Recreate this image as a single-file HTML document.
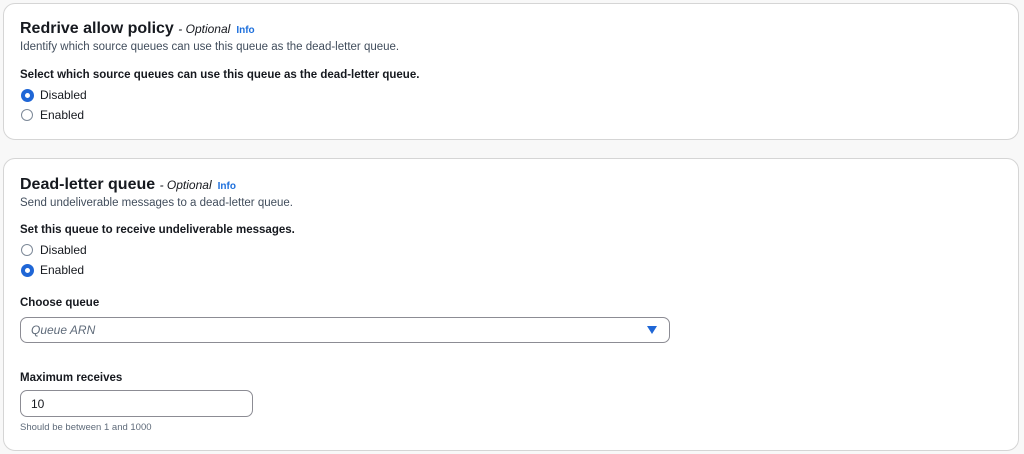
<!DOCTYPE html>
<html><head><style>
body{margin:0;width:1024px;height:454px;background:#f8f8f8;font-family:"Liberation Sans",sans-serif;color:#16191f;position:relative;overflow:hidden}
.card{position:absolute;left:3px;width:1016px;background:#fff;border:1px solid #d5d5d5;border-radius:12px;box-sizing:border-box}
.a{position:absolute;white-space:nowrap}
.t{font-size:16px;font-weight:bold}
.t i{font-weight:normal;font-size:12px}
.t b{color:#1d6fdc;font-size:10px;margin-left:6px}
.d{font-size:11.5px;color:#414d5c}
.l{font-size:11.5px;font-weight:bold}
.r{font-size:12px}
.rad{position:absolute;width:10px;height:10px;border:1px solid #7d8998;border-radius:50%;background:#fff}
.rad.on{border:4px solid #1f66d6;width:5px;height:5px}
.box{position:absolute;border:1px solid #8c8c94;border-radius:7px;background:#fff;box-sizing:border-box}
</style></head><body>
<div class="card" style="top:3px;height:137px"></div>
<div class="card" style="top:158px;height:293px"></div>

<div class="a t" style="left:20px;top:20px">Redrive allow policy <i>- Optional</i><b>Info</b></div>
<div class="a d" style="left:20px;top:41px">Identify which source queues can use this queue as the dead-letter queue.</div>
<div class="a l" style="left:20px;top:69px">Select which source queues can use this queue as the dead-letter queue.</div>
<div class="rad on" style="left:21px;top:89px"></div><div class="a r" style="left:40px;top:88px">Disabled</div>
<div class="rad" style="left:21px;top:109px"></div><div class="a r" style="left:40px;top:108px">Enabled</div>

<div class="a t" style="left:20px;top:176px">Dead-letter queue <i>- Optional</i><b>Info</b></div>
<div class="a d" style="left:20px;top:197px">Send undeliverable messages to a dead-letter queue.</div>
<div class="a l" style="left:20px;top:224px">Set this queue to receive undeliverable messages.</div>
<div class="rad" style="left:21px;top:244px"></div><div class="a r" style="left:40px;top:243px">Disabled</div>
<div class="rad on" style="left:21px;top:264px"></div><div class="a r" style="left:40px;top:263px">Enabled</div>

<div class="a l" style="left:20px;top:297px">Choose queue</div>
<div class="box" style="left:20px;top:317px;width:650px;height:26px"></div>
<div class="a r" style="left:31px;top:323px;font-style:italic;color:#5f6b7a">Queue ARN</div>
<svg class="a" style="left:647px;top:326px" width="10" height="8"><path d="M0 0H10L5 8Z" fill="#1f66d6"/></svg>

<div class="a l" style="left:20px;top:372px">Maximum receives</div>
<div class="box" style="left:20px;top:390px;width:233px;height:27px"></div>
<div class="a r" style="left:31px;top:397px">10</div>
<div class="a" style="left:20px;top:422px;font-size:9.5px;color:#5f6b7a">Should be between 1 and 1000</div>
</body></html>
